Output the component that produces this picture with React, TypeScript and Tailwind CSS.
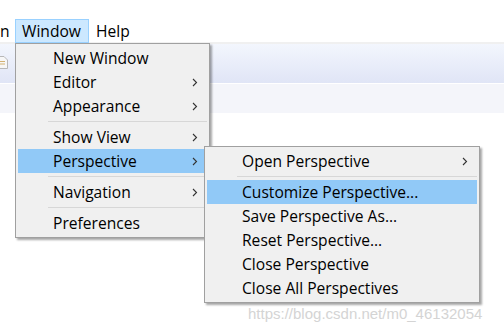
import React from "react";

const Chevron = () => (
  <svg width="6" height="9" viewBox="0 0 6 9" className="block">
    <path d="M1 1 L4.5 4.5 L1 8" fill="none" stroke="#333" strokeWidth="1.1" />
  </svg>
);

type Item = { label: string; sub?: boolean; active?: boolean } | "sep";

const Menu = ({ items, className, width }: { items: Item[]; className: string; width: string }) => (
  <div
    className={`absolute ${width} ${className} bg-[#f0f0f0] border border-[#a0a0a0] py-[2px] shadow-[2px_2px_2px_rgba(0,0,0,0.35)]`}
  >
    {items.map((it, i) =>
      it === "sep" ? (
        <div key={i} className="h-[7px] flex items-center pl-[32px] pr-[2px]">
          <div className="h-px w-full bg-[#d7d7d7]" />
        </div>
      ) : (
        <div
          key={i}
          className={`h-[24px] mx-[2px] flex items-center pl-[35px] pr-[9px] ${it.active ? "bg-[#91c9f7]" : ""}`}
        >
          <span className="flex-1 whitespace-nowrap pt-[2px]">{it.label}</span>
          {it.sub && <Chevron />}
        </div>
      )
    )}
  </div>
);

export default function App() {
  return (
    <div
      className="relative w-[504px] h-[331px] bg-white overflow-hidden text-[15.6px] text-black"
      style={{ fontFamily: '"Open Sans", "Noto Sans", sans-serif' }}
    >
      <div className="h-[42px] flex items-end">
        <div className="flex items-center h-[24px] mb-[-1px]">
          <span className="w-[15px] pt-[2px]">n</span>
          <div className="h-[24px] w-[74px] bg-[#cce8ff] border border-[#99d1ff] flex items-center pl-[6px] pt-[2px]">
            Window
          </div>
          <span className="ml-[7px] pt-[2px]">Help</span>
        </div>
      </div>
      <div className="h-[2px] bg-[#f0f0f0]" />
      <div className="h-[39px] bg-gradient-to-b from-[#f3f6fd] to-[#e0e5f6] flex items-start">
        <svg width="10" height="15" viewBox="0 0 10 15" className="ml-[-2px] mt-[11px]">
          <path d="M0.5 1.5 H6 L9.5 5 V13.5 H0.5 Z" fill="#f7f7f7" stroke="#b8b8b8" />
          <path d="M2 6.5 H7 M2 9 H7" stroke="#d3b273" />
        </svg>
      </div>
      <div className="h-px bg-white" />
      <div className="h-[29px] bg-[#f4f5fa]" />

      <Menu
        className="left-[15px] top-[43px]"
        width="w-[195px]"
        items={[
          { label: "New Window" },
          { label: "Editor", sub: true },
          { label: "Appearance", sub: true },
          "sep",
          { label: "Show View", sub: true },
          { label: "Perspective", sub: true, active: true },
          "sep",
          { label: "Navigation", sub: true },
          "sep",
          { label: "Preferences" },
        ]}
      />
      <Menu
        className="left-[204px] top-[146px]"
        width="w-[276px]"
        items={[
          { label: "Open Perspective", sub: true },
          "sep",
          { label: "Customize Perspective...", active: true },
          { label: "Save Perspective As..." },
          { label: "Reset Perspective..." },
          { label: "Close Perspective" },
          { label: "Close All Perspectives" },
        ]}
      />
      <div
        className="absolute left-[248px] top-[303px] text-[15px] text-[#d4d4d4] whitespace-nowrap"
        style={{ fontFamily: '"Liberation Sans", Arial, sans-serif' }}
      >
        https://blog.csdn.net/m0_46132054
      </div>
    </div>
  );
}
